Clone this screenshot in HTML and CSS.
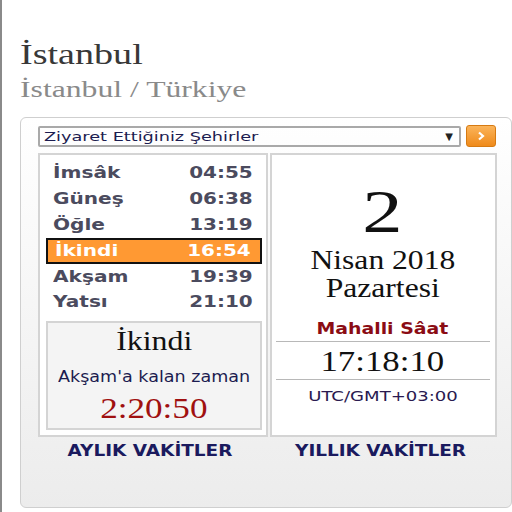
FILE: index.html
```html
<!DOCTYPE html>
<html lang="tr">
<head>
  <meta charset="UTF-8" />
  <title>İstanbul Namaz Vakitleri</title>
  <link rel="stylesheet" href="styles.css">
</head>
<body>
  <div class="page">
    <h1 class="city"><span>İstanbul</span></h1>
    <h2 class="region"><span>İstanbul / Türkiye</span></h2>

    <div class="panel">
      <div class="picker">
        <div class="select">
          <span class="select-text">Ziyaret Ettiğiniz Şehirler</span>
          <span class="caret">&#9660;</span>
        </div>
        <button class="go">
          <svg width="10" height="10" viewBox="0 0 10 10"><path d="M3 1.5 L7 5 L3 8.5" fill="none" stroke="#fff" stroke-width="2.2"/></svg>
        </button>
      </div>

      <div class="boxes">
        <div class="box times">
          <ul class="list">
            <li><span>İmsâk</span><span>04:55</span></li>
            <li><span>Güneş</span><span>06:38</span></li>
            <li><span>Öğle</span><span>13:19</span></li>
            <li class="now"><span>İkindi</span><span>16:54</span></li>
            <li><span>Akşam</span><span>19:39</span></li>
            <li><span>Yatsı</span><span>21:10</span></li>
          </ul>
          <div class="remain">
            <div class="remain-name"><span>İkindi</span></div>
            <div class="remain-label"><span>Akşam'a kalan zaman</span></div>
            <div class="remain-time"><span>2:20:50</span></div>
          </div>
        </div>
        <div class="box date">
          <div class="day"><span>2</span></div>
          <div class="month first"><span>Nisan 2018</span></div>
          <div class="month"><span>Pazartesi</span></div>
          <div class="local"><span>Mahalli Sâat</span></div>
          <div class="clock"><span>17:18:10</span></div>
          <div class="zone"><span>UTC/GMT+03:00</span></div>
        </div>
      </div>

      <div class="links">
        <a href="#"><span>AYLIK VAKİTLER</span></a>
        <a href="#"><span>YILLIK VAKİTLER</span></a>
      </div>
    </div>
  </div>
</body>
</html>
```

FILE: styles.css
```css
body {
  margin: 0;
  background: #fff;
  font-family: "DejaVu Sans", Verdana, sans-serif;
}

/* the old site renders its type wide, so the text runs are stretched */
.city span,
.region span,
.select-text,
.list span,
.remain span,
.date span,
.links span {
  display: inline-block;
}

.page {
  border-left: 2px solid #8a8a8a;
  min-height: 512px;
  padding: 37px 0 0 18px;
  box-sizing: border-box;
}

.city {
  margin: 0;
  font-family: "Liberation Serif", serif;
  font-weight: normal;
  font-size: 30px;
  line-height: 34px;
  color: #383838;
}

.city span {
  transform: scaleX(1.27);
  transform-origin: left;
}

.region {
  margin: 3px 0 0 0;
  font-family: "Liberation Serif", serif;
  font-weight: normal;
  font-size: 24px;
  line-height: 30px;
  color: #8a8a8a;
}

.region span {
  transform: scaleX(1.32);
  transform-origin: left;
}

.panel {
  margin-top: 13px;
  height: 391px;
  border: 1px solid #cfcfcf;
  border-radius: 6px;
  background: linear-gradient(#fff, #ececec);
  padding: 7px 14px 0 17px;
  box-sizing: border-box;
}

.picker {
  display: flex;
  align-items: center;
  gap: 5px;
}

.select {
  width: 423px;
  height: 21px;
  box-sizing: border-box;
  border: 2px solid #a9a9a9;
  border-radius: 2px;
  display: flex;
  justify-content: space-between;
  align-items: center;
  padding: 0 6px 0 4px;
  font-size: 13px;
  color: #1c1c50;
}

.select-text {
  transform: scaleX(1.36);
  transform-origin: left;
}

.caret {
  font-size: 10px;
  color: #222;
}

.go {
  width: 30px;
  height: 22px;
  border: 1px solid #d67a12;
  border-radius: 3px;
  background: linear-gradient(#fbb45a, #ef8a1a);
  padding: 0;
  display: flex;
  align-items: center;
  justify-content: center;
}

.boxes {
  display: flex;
  gap: 2px;
  margin-top: 6px;
}

.box {
  background: #fff;
  border: 2px solid #d4d4d4;
  box-sizing: border-box;
  height: 284px;
}

.times {
  width: 230px;
  padding: 5px 4px 0 6px;
}

.date {
  width: 228px;
  text-align: center;
  padding: 0 5px 0 4px;
}

.list {
  list-style: none;
  margin: 0;
  padding: 0;
}

.list li {
  display: flex;
  justify-content: space-between;
  height: 25.9px;
  align-items: center;
  padding: 0 9px 0 7px;
  font-weight: bold;
  font-size: 15px;
  color: #4b4b5e;
  box-sizing: border-box;
}

.list li span:first-child {
  transform: scaleX(1.34);
  transform-origin: left;
}

.list li span:last-child {
  transform: scaleX(1.33);
  transform-origin: right;
}

.list li.now {
  background: #ff9933;
  border: 2px solid #111;
  color: #fff;
  padding: 0 9px 0 7px;
}

.remain {
  margin-top: 6px;
  height: 109px;
  background: #f4f4f4;
  border: 2px solid #d4d4d4;
  box-sizing: border-box;
  text-align: center;
}

.remain-name {
  font-family: "Liberation Serif", serif;
  font-size: 27px;
  line-height: 30px;
  color: #111;
  margin-top: 3px;
}

.remain-name span {
  transform: scaleX(1.18);
}

.remain-label {
  font-size: 15px;
  line-height: 18px;
  color: #1c1c50;
  margin-top: 12px;
}

.remain-label span {
  transform: scaleX(1.17);
}

.remain-time {
  font-family: "Liberation Serif", serif;
  font-size: 30px;
  line-height: 34px;
  color: #a01010;
  margin-top: 5px;
}

.remain-time span {
  transform: scaleX(1.17);
}

.day {
  font-family: "Liberation Serif", serif;
  font-size: 62px;
  line-height: 64px;
  color: #111;
  margin-top: 24px;
}

.day span {
  transform: scaleX(1.3);
}

.month {
  font-family: "Liberation Serif", serif;
  font-size: 27px;
  line-height: 28px;
  color: #111;
}

.month span {
  transform: scaleX(1.17);
}

.month.first {
  margin-top: 3px;
}

.local {
  font-weight: bold;
  font-size: 15px;
  line-height: 18px;
  color: #8b0c14;
  margin-top: 18px;
  padding-bottom: 3px;
  border-bottom: 1px solid #b8b8b8;
}

.local span {
  transform: scaleX(1.26);
}

.clock {
  font-family: "Liberation Serif", serif;
  font-size: 30px;
  line-height: 37px;
  color: #111;
  border-bottom: 1px solid #b8b8b8;
}

.clock span {
  transform: scaleX(1.16);
}

.zone {
  font-size: 14px;
  line-height: 17px;
  color: #2a1a50;
  margin-top: 8px;
}

.zone span {
  transform: scaleX(1.29);
}

.links {
  display: flex;
  gap: 2px;
}

.links a {
  text-align: center;
  font-weight: bold;
  font-size: 15px;
  color: #1a1a5e;
  text-decoration: none;
  padding: 5px 5px 0 0;
  box-sizing: border-box;
}

.links span {
  transform: scaleX(1.23);
}

.links a:first-child {
  width: 230px;
}

.links a:last-child {
  width: 228px;
}
```
